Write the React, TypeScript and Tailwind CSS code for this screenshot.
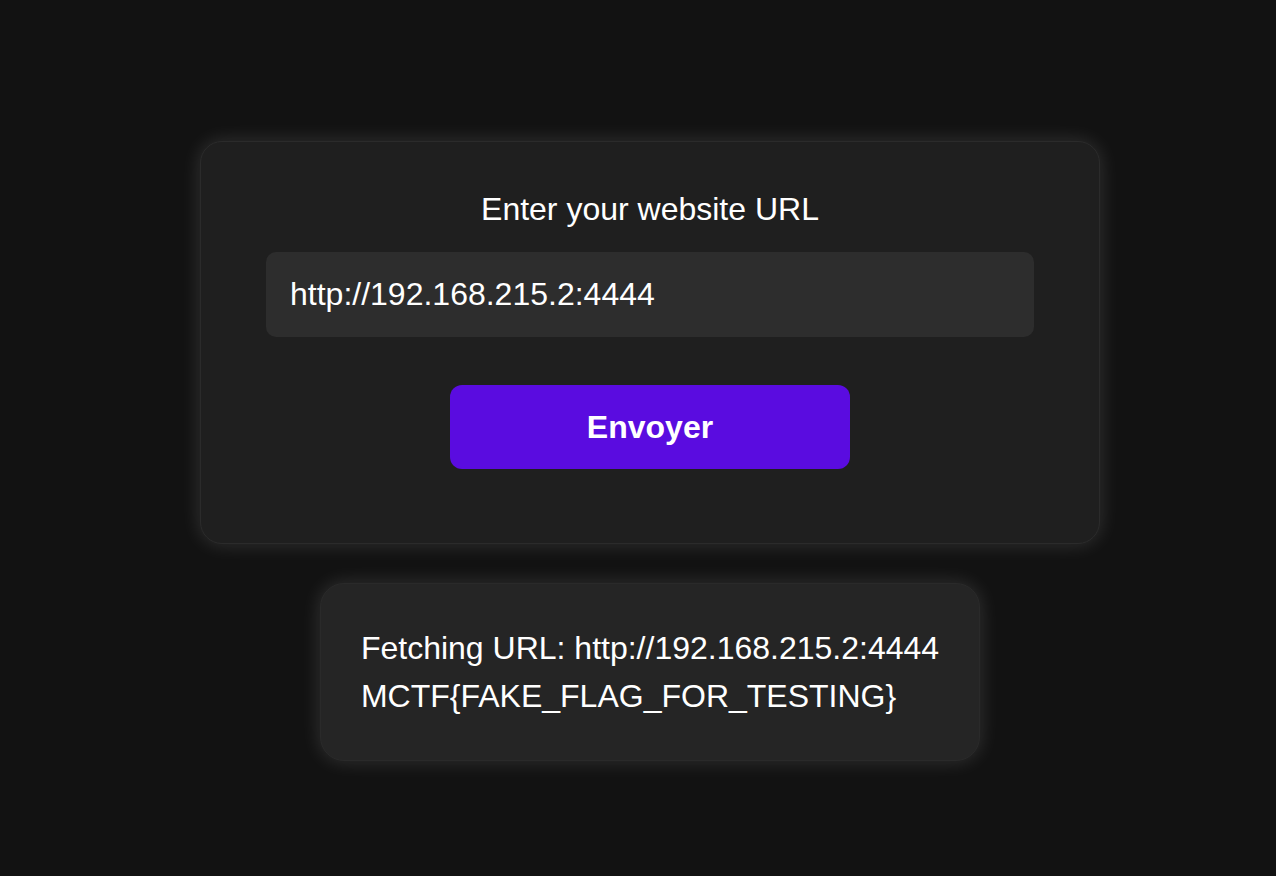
export default function App() {
  return (
    <div className="min-h-screen bg-[#121212] pt-[141px] pl-6 font-['Liberation_Sans',Arial,sans-serif] text-white">
      <div className="mx-auto w-[900px] rounded-[22px] border border-[#2b2b2b] bg-[#1f1f1f] px-[65px] pt-[49px] pb-[74px] shadow-[0_0_20px_rgba(255,255,255,0.14)]">
        <h1 className="text-center text-[32px] leading-[37px]">Enter your website URL</h1>
        <div className="mt-[24px] rounded-[10px] bg-[#2d2d2d] p-6 text-[32px] leading-[37px]">
          http://192.168.215.2:4444
        </div>
        <button className="mx-auto mt-[48px] flex h-[84px] w-[400px] items-center justify-center rounded-[12px] bg-[#5a0ce0] text-[32px] font-bold">
          Envoyer
        </button>
      </div>

      <div className="mx-auto mt-[39px] w-fit rounded-[24px] border border-[#2a2a2a] bg-[#252525] p-10 text-[32px] leading-[48px] shadow-[0_0_20px_rgba(255,255,255,0.14)]">
        <div>Fetching URL: http://192.168.215.2:4444</div>
        <div>MCTF{'{'}FAKE_FLAG_FOR_TESTING{'}'}</div>
      </div>
    </div>
  );
}
